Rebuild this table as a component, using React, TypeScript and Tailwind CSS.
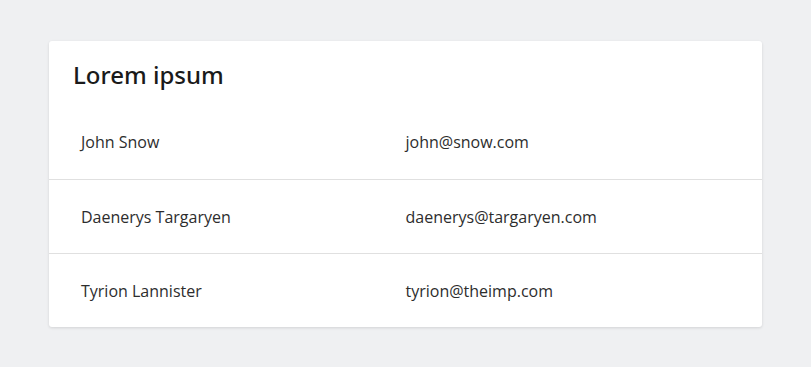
const people = [
  { name: 'John Snow', email: 'john@snow.com' },
  { name: 'Daenerys Targaryen', email: 'daenerys@targaryen.com' },
  { name: 'Tyrion Lannister', email: 'tyrion@theimp.com' },
];

export default function App() {
  return (
    <div
      className="min-h-[367px] bg-[#eff0f2] px-[49px] pt-[41px] pb-[40px]"
      style={{ fontFamily: '"Open Sans", "Noto Sans", sans-serif' }}
    >
      <div className="rounded-[3px] bg-white shadow-[0_1px_3px_rgba(0,0,0,0.12)]">
        <div className="flex h-[64px] items-center px-[24px] pt-[3px]">
          <h2
            className="text-[24px] leading-[36px] font-medium text-[#1a1a1a]"
            style={{ fontFamily: '"Noto Sans", "Open Sans", sans-serif' }}
          >
            Lorem ipsum
          </h2>
        </div>
        <div>
          {people.map((person, index) => (
            <div
              key={person.email}
              className={`grid h-[74px] grid-cols-2 items-center text-[16px] text-[#2d2d2d] ${
                index > 0 ? 'border-t border-[#e0e0e0]' : ''
              }`}
            >
              <span className="pl-8">{person.name}</span>
              <span>{person.email}</span>
            </div>
          ))}
        </div>
      </div>
    </div>
  );
}
